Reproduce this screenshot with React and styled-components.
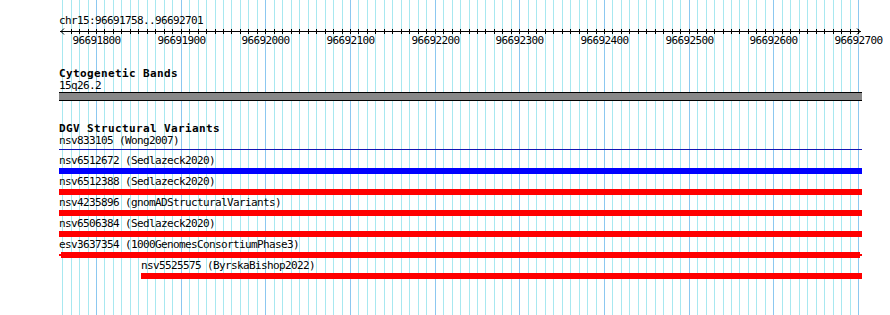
import React from "react";
import styled, { createGlobalStyle } from "styled-components";

const VIEW_W = 890;
const VIEW_H = 315;
const DATA_LEFT = 59;
const DATA_RIGHT = 862;
const DATA_W = DATA_RIGHT - DATA_LEFT;
const BP0 = 96691800;
const X0 = 96;
const PX_PER_BP = 0.84667;
const toX = (bp) => X0 + (bp - BP0) * PX_PER_BP;

const ticks = [];
for (let k = -4; k <= 90; k++) {
  const bp = BP0 + k * 10;
  ticks.push({ bp, x: Math.round(toX(bp)), major: bp % 100 === 0 });
}
const majors = ticks.filter((t) => t.major);

const features = [
  { name: "nsv833105 (Wong2007)", kind: "line", start: DATA_LEFT, end: DATA_RIGHT, color: "#1414b4" },
  { name: "nsv6512672 (Sedlazeck2020)", kind: "bar", start: DATA_LEFT, end: DATA_RIGHT, color: "#0000ff" },
  { name: "nsv6512388 (Sedlazeck2020)", kind: "bar", start: DATA_LEFT, end: DATA_RIGHT, color: "#ff0000" },
  { name: "nsv4235896 (gnomADStructuralVariants)", kind: "bar", start: DATA_LEFT, end: DATA_RIGHT, color: "#ff0000" },
  { name: "nsv6506384 (Sedlazeck2020)", kind: "bar", start: DATA_LEFT, end: DATA_RIGHT, color: "#ff0000" },
  { name: "esv3637354 (1000GenomesConsortiumPhase3)", kind: "bar", start: DATA_LEFT, end: DATA_RIGHT, thickStart: 61, thickEnd: 860, color: "#ff0000" },
  { name: "nsv5525575 (ByrskaBishop2022)", kind: "bar", start: 141, end: DATA_RIGHT, color: "#ff0000" },
];

const GlobalStyle = createGlobalStyle`
  html, body { margin: 0; padding: 0; background: #ffffff; }
`;

const Page = styled.div`
  position: relative;
  width: ${VIEW_W}px;
  height: ${VIEW_H}px;
  overflow: hidden;
  background: #ffffff;
  font-family: "DejaVu Sans Mono", "Liberation Mono", monospace;
  color: #000;
`;

const GridLayer = styled.svg`
  position: absolute;
  left: 0;
  top: 0;
  z-index: 0;
`;

const Tracks = styled.div`
  position: relative;
  z-index: 1;
  display: flex;
  flex-direction: column;
  width: ${DATA_W}px;
  padding: 15px 0 0 ${DATA_LEFT}px;
`;

const TextLine = styled.div`
  height: 12px;
  font-size: 11px;
  line-height: 12px;
  letter-spacing: -0.62px;
  white-space: pre;
`;

const TrackTitle = styled.div`
  height: 13px;
  margin-top: ${(p) => p.$gap}px;
  font-size: 11px;
  line-height: 13px;
  font-weight: bold;
  letter-spacing: 0.38px;
  white-space: pre;
`;

const Axis = styled.svg`
  display: block;
  width: ${DATA_W}px;
  height: 8px;
`;

const AxisLabels = styled.div`
  position: relative;
  height: 12px;
`;

const AxisLabel = styled(TextLine)`
  position: absolute;
  top: 0;
  transform: translateX(-50%);
`;

const BandTrack = styled.div`
  height: 7px;
  width: ${DATA_W}px;
  background: #888888;
  border-top: 1px solid #000;
  border-bottom: 1px solid #000;
`;

const FeatureRow = styled.div`
  display: flex;
  flex-direction: column;
  margin-bottom: ${(p) => p.$after}px;
`;

const FeatureLabel = styled(TextLine)``;

const Lane = styled.div`
  display: grid;
  height: 6px;
  margin-top: 1px;
  width: ${DATA_W}px;
`;

const ThickBar = styled.div`
  grid-area: 1 / 1;
  height: 6px;
  background: ${(p) => p.$color};
`;

const ThinLine = styled.div`
  grid-area: 1 / 1;
  align-self: start;
  height: ${(p) => p.$h}px;
  margin-top: ${(p) => p.$top}px;
  background: ${(p) => p.$color};
`;

function Grid() {
  return (
    <GridLayer width={VIEW_W} height={VIEW_H}>
      {ticks.map((t) => (
        <line
          key={t.bp}
          x1={t.x + 0.5}
          x2={t.x + 0.5}
          y1={0}
          y2={VIEW_H}
          stroke={t.major ? "#8cc8f0" : "#a8e8f0"}
          strokeWidth={1}
        />
      ))}
    </GridLayer>
  );
}

function Ruler() {
  const l = (x) => x - DATA_LEFT;
  return (
    <>
      <Axis viewBox={`0 0 ${DATA_W} 8`}>
        <line x1={l(60)} x2={l(861)} y1={4.5} y2={4.5} stroke="#000" strokeWidth={1} />
        {ticks
          .filter((t) => t.x > 62 && t.x < 859)
          .map((t) => (
            <line key={t.bp} x1={l(t.x) + 0.5} x2={l(t.x) + 0.5} y1={2} y2={7} stroke="#000" strokeWidth={1} />
          ))}
        <polyline points={`${l(64)},1.5 ${l(61)},4.5 ${l(64)},7.5`} fill="none" stroke="#000" strokeWidth={1} />
        <polyline points={`${l(857)},1.5 ${l(860)},4.5 ${l(857)},7.5`} fill="none" stroke="#000" strokeWidth={1} />
      </Axis>
      <AxisLabels>
        {majors.map((t) => (
          <AxisLabel key={t.bp} style={{ left: t.x - DATA_LEFT + 0.5 }}>
            {t.bp}
          </AxisLabel>
        ))}
      </AxisLabels>
    </>
  );
}

function Feature({ f, last }) {
  const off = f.start - DATA_LEFT;
  return (
    <FeatureRow $after={f.kind === "line" ? 1 : 2}>
      <FeatureLabel style={{ marginLeft: off }}>{f.name}</FeatureLabel>
      <Lane>
        {f.kind === "line" ? (
          <ThinLine $h={1} $top={1} $color={f.color} style={{ marginLeft: off, width: f.end - f.start }} />
        ) : f.thickStart ? (
          <>
            <ThinLine $h={2} $top={2} $color={f.color} style={{ marginLeft: off, width: f.end - f.start }} />
            <ThickBar
              $color={f.color}
              style={{ marginLeft: f.thickStart - DATA_LEFT, width: f.thickEnd - f.thickStart }}
            />
          </>
        ) : (
          <ThickBar $color={f.color} style={{ marginLeft: off, width: f.end - f.start }} />
        )}
      </Lane>
    </FeatureRow>
  );
}

export default function App() {
  return (
    <>
      <GlobalStyle />
      <Page>
        <Grid />
        <Tracks>
          <TextLine>chr15:96691758..96692701</TextLine>
          <Ruler />
          <TrackTitle $gap={20}>Cytogenetic Bands</TrackTitle>
          <TextLine>15q26.2</TextLine>
          <BandTrack />
          <TrackTitle $gap={21}>DGV Structural Variants</TrackTitle>
          {features.map((f) => (
            <Feature key={f.name} f={f} />
          ))}
        </Tracks>
      </Page>
    </>
  );
}
